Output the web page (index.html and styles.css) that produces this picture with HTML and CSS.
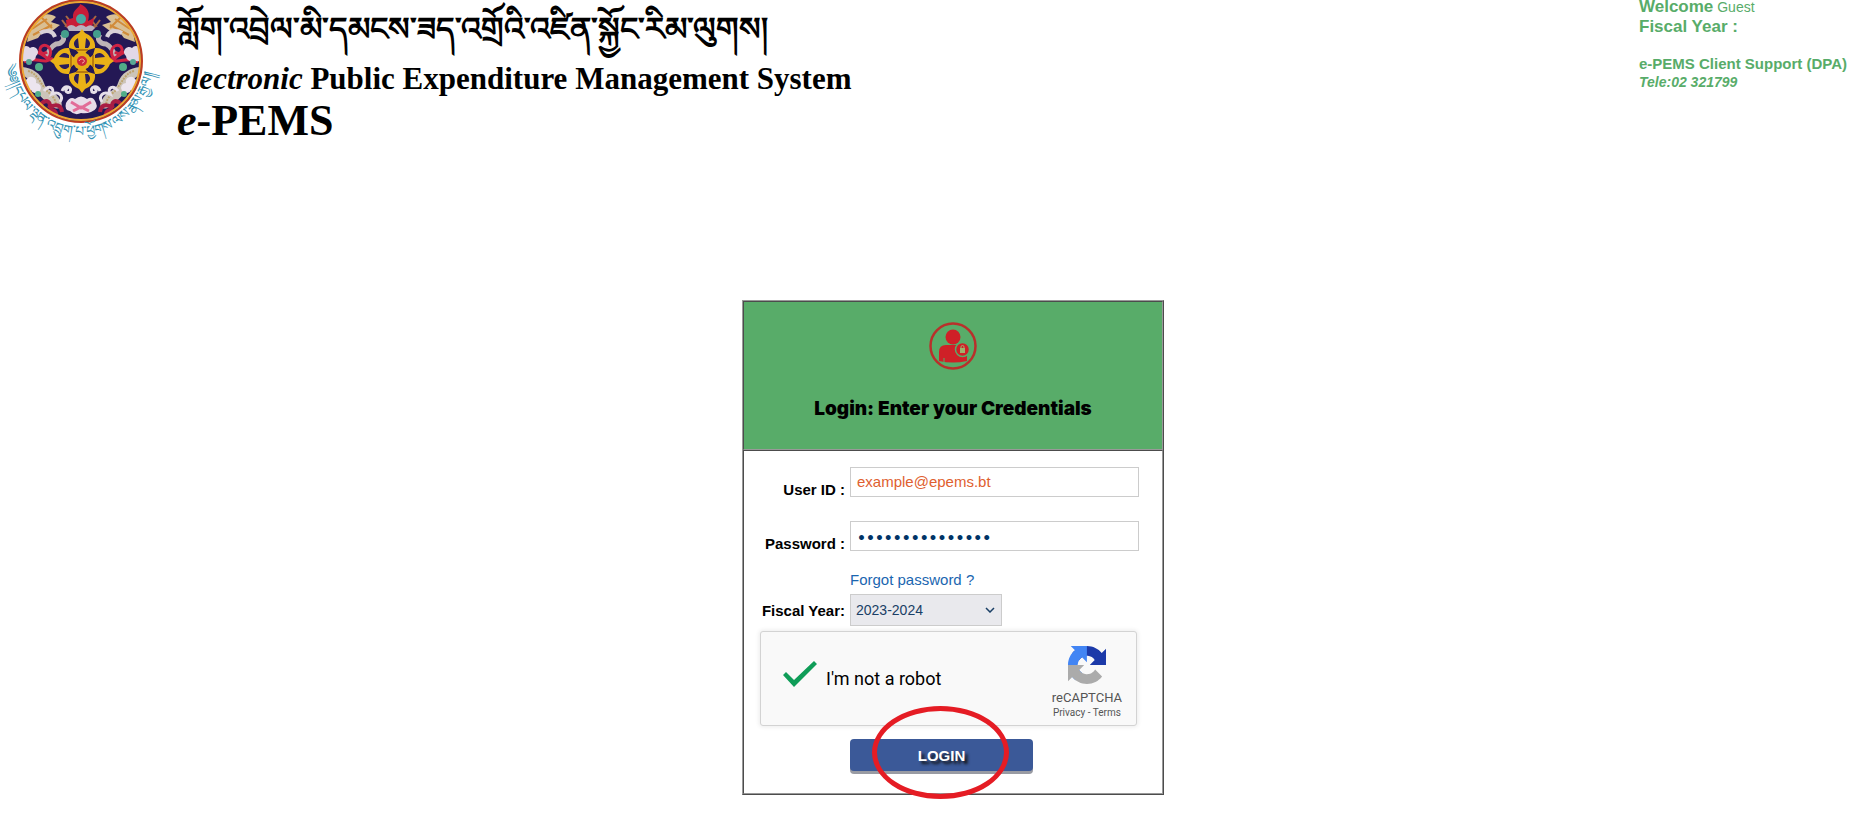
FILE: index.html
```html
<!DOCTYPE html>
<html lang="en">
<head>
  <meta charset="UTF-8">
  <meta name="viewport" content="width=device-width, initial-scale=1.0">
  <title>e-PEMS</title>
  <link rel="stylesheet" href="styles.css">
</head>
<body>
  <!-- Header -->
  <header class="header">
    <svg class="emblem" viewBox="0 0 170 150" role="img" aria-label="Royal Government of Bhutan">
      <defs>
        <clipPath id="disc"><circle cx="81" cy="61" r="59"/></clipPath>
        <path id="motto-line" d="M5 64 C12 109 44 136 81 136 C118 136 148 109 156 64"/>
        <g id="vajra">
          <path d="M82 57 L76 50 L69 48 C68 40 74 35 79 33 L82 29 L85 33 C90 35 96 40 95 48 L88 50 Z" fill="#e9b117"/>
          <path d="M78 38 C73 41 73 45 76 48 L79 48 Z M86 38 C91 41 91 45 88 48 L85 48 Z" fill="#2a1d5c"/>
          <path d="M76 50 H88" stroke="#a8690c" stroke-width="1.5"/>
        </g>
        <!-- one side of the disc, mirrored for the other -->
        <g id="dragon">
          <path d="M30 27 C35 15 48 11 56 17 L51 22 L60 25 L52 31 L45 29 L38 38 L27 42 Z" fill="#d9bf94"/>
          <path d="M32 29 L47 19 M33 35 L52 25 M40 16 L52 28" stroke="#d18b3a" stroke-width="2"/>
          <path d="M40 33 C47 29 53 31 55 37" fill="none" stroke="#d8d0d8" stroke-width="4"/>
          <path d="M62 34 C66 39 62 44 56 44 C50 47 48 52 47 57" fill="none" stroke="#beb4b6" stroke-width="5"/>
          <path d="M22 67 C32 68 41 73 44 83 C46 91 56 91 60 100 C65 107 58 111 53 107 C43 99 38 95 32 85 C28 78 24 75 21 76 Z" fill="#ccc4b9"/>
          <path d="M28 71 C37 73 40 83 47 91 C53 96 55 99 56 104" fill="none" stroke="#bda36e" stroke-width="2" stroke-dasharray="2 1"/>
          <path d="M23 57 C31 47 41 53 48 59 C54 51 48 43 42 46 C37 50 42 56 47 52 M24 62 C35 55 44 66 53 58" fill="none" stroke="#cf2344" stroke-width="3"/>
          <path d="M21 51 a5 5 0 0 1 9 -3 a5 5 0 0 1 6 8 a5 5 0 0 1 -8 4 a5 5 0 0 1 -7 -9Z" fill="#e2d8e7"/>
          <path d="M27 79 a5 5 0 0 1 9 4 a5 5 0 0 1 4 8 a5 5 0 0 1 -9 -1 a6 6 0 0 1 -4 -11Z" fill="#ece5ef"/>
          <path d="M44 91 C49 84 55 88 52 94 C59 91 64 96 60 102 M62 91 C65 84 73 87 70 92 C66 94 64 89 68 88" fill="none" stroke="#e6dfe9" stroke-width="3"/>
          <circle cx="65" cy="34" r="4" fill="#449e8c"/>
          <circle cx="29" cy="62" r="3" fill="#59a795"/>
          <circle cx="39" cy="67" r="4" fill="#51ad88"/>
          <circle cx="38" cy="94" r="3" fill="#51ad88"/>
          <path d="M41 104 C47 98 52 103 49 108 C56 103 61 105 62 112 M48 113 C53 107 57 112 56 117" fill="none" stroke="#a91d43" stroke-width="4"/>
          <path d="M66 16 L70 21 L66 26 L74 28 M62 20 L68 28" fill="none" stroke="#a96943" stroke-width="2"/>
        </g>
      </defs>
      <circle cx="81" cy="61" r="61" fill="#241855" stroke="#bd3c21" stroke-width="2"/>
      <g clip-path="url(#disc)">
        <use href="#dragon"/>
        <use href="#dragon" transform="matrix(-1 0 0 1 162 0)"/>
        <!-- jewel -->
        <path d="M73 18 C72 9 80 8 80 4 C89 8 90 14 88 21 L94 18 L92 28 H67 L66 20 Z" fill="#c81d38"/>
        <circle cx="81" cy="19" r="5" fill="#4aa8a1"/>
        <path d="M67 27 Q71 23 76 27 Q81 23 86 27 Q91 23 95 28 L92 31 H69 Z" fill="#bab1be"/>
        <!-- crossed thunderbolts -->
        <use href="#vajra"/>
        <use href="#vajra" transform="rotate(90 82 61)"/>
        <use href="#vajra" transform="rotate(180 82 61)"/>
        <use href="#vajra" transform="rotate(270 82 61)"/>
        <circle cx="82" cy="61" r="9" fill="#e6ad18"/>
        <circle cx="82" cy="61" r="5" fill="#c9273d"/>
        <path d="M79 61 a3 3 0 0 1 5 -1 a2 2 0 0 1 -2 3" fill="none" stroke="#f1a5a0"/>
        <!-- lotus -->
        <path d="M66 103 Q70 96 75 99 Q81 94 87 99 Q93 95 96 103 Q99 109 91 112 Q86 114 81 113 Q75 116 70 111 Q64 110 66 103Z" fill="#e8dce9"/>
        <path d="M71 102 L81 108 L91 102 M73 111 L81 107 L89 111" fill="none" stroke="#e26c98" stroke-width="3"/>
      </g>
      <circle cx="81" cy="61" r="59" fill="none" stroke="#efa633" stroke-width="2"/>
      <text class="motto"><textPath href="#motto-line" startOffset="1">༄༅།།དཔལ་ལྡན་འབྲུག་པ་ཕྱོགས་ལས་རྣམ་རྒྱལ།།</textPath></text>
    </svg>

    <div class="titles">
      <div class="title-dz" lang="dz">གློག་འབྲེལ་མི་དམངས་ཟད་འགྲོའི་འཛིན་སྐྱོང་རིམ་ལུགས།</div>
      <div class="title-full"><em>electronic</em> Public Expenditure Management System</div>
      <h1 class="title-short"><em>e</em>-PEMS</h1>
    </div>

    <div class="info">
      <div class="info-user"><strong>Welcome</strong> Guest</div>
      <div class="info-year">Fiscal Year :</div>
      <div class="info-support">e-PEMS Client Support (DPA)</div>
      <div class="info-tele">Tele:02 321799</div>
    </div>
  </header>

  <!-- Login -->
  <main class="main">
    <form class="login">
      <div class="login-head">
        <svg class="user-icon" viewBox="0 0 48 48" aria-hidden="true">
          <circle cx="24" cy="24" r="22.5" fill="none" stroke="#b9302b" stroke-width="2.5"/>
          <circle cx="24" cy="15" r="7.5" fill="#cf2027"/>
          <path d="M10 39 V30 Q10 23 17 23 H31 Q38 24 38 31 V39 Q24 42 10 39Z" fill="#cf2027"/>
          <path d="M15 36 V40" stroke="#58ac69"/>
          <circle cx="33.5" cy="27.5" r="7" fill="#cf2027" stroke="#58ac69" stroke-width="1.5"/>
          <rect x="31" y="26" width="5" height="5" fill="#9fb06c"/>
          <path d="M32 26 V25 a1.5 1.5 0 0 1 3 0 V26" fill="none" stroke="#9fb06c"/>
        </svg>
        <h2>Login: Enter your Credentials</h2>
      </div>

      <div class="login-body">
        <label class="name" for="user">User ID :</label>
        <input class="field" id="user" type="text" value="example@epems.bt">

        <label class="name" for="password">Password :</label>
        <input class="field field-password" id="password" type="password" value="123456789012345">

        <a class="forgot" href="#">Forgot password ?</a>

        <label class="name name-year" for="year">Fiscal Year:</label>
        <div class="year">
          <select id="year">
            <option>2023-2024</option>
          </select>
          <svg viewBox="0 0 10 6" aria-hidden="true"><path d="M1 1 L5 5 L9 1" fill="none" stroke="#1a3f66" stroke-width="1.5"/></svg>
        </div>

        <div class="captcha">
          <label class="robot"><input type="checkbox" checked> I'm not a robot</label>
          <div class="captcha-brand">
            <svg class="captcha-logo" viewBox="0 0 64 64" aria-hidden="true">
              <path fill="#1c3aa9" d="M64 31.955l-.033-1.37V4.687l-7.16 7.16C50.948 4.674 42.033.093 32.05.093c-10.4 0-19.622 4.96-25.458 12.64l11.736 11.86a15.55 15.55 0 0 1 4.754-5.334c2.05-1.6 4.952-2.906 8.968-2.906.485 0 .86.057 1.135.163 4.976.393 9.288 3.14 11.828 7.124l-8.307 8.307L64 31.953"/>
              <path fill="#4285f4" d="M31.862.094l-1.37.033H4.594l7.16 7.16C4.58 13.147 0 22.06 0 32.046c0 10.4 4.96 19.622 12.64 25.458L24.5 45.768a15.55 15.55 0 0 1-5.334-4.754c-1.6-2.05-2.906-4.952-2.906-8.968 0-.485.057-.86.163-1.135.393-4.976 3.14-9.288 7.124-11.828l8.307 8.307L31.86.095"/>
              <path fill="#ababab" d="M.001 32.045l.033 1.37v25.898l7.16-7.16c5.86 7.173 14.774 11.754 24.76 11.754 10.4 0 19.622-4.96 25.458-12.64l-11.736-11.86a15.55 15.55 0 0 1-4.754 5.334c-2.05 1.6-4.952 2.906-8.968 2.906-.485 0-.86-.057-1.135-.163-4.976-.393-9.288-3.14-11.828-7.124l8.307-8.307c-10.522.04-22.4.066-27.295-.005"/>
            </svg>
            <div class="captcha-name">reCAPTCHA</div>
            <div class="captcha-links"><a href="#">Privacy</a> - <a href="#">Terms</a></div>
          </div>
        </div>

        <div class="submit">
          <button class="btn" type="submit">LOGIN</button>
          <span class="marker"></span>
        </div>
      </div>
    </form>
  </main>
</body>
</html>
```

FILE: styles.css
```css
* {
  box-sizing: border-box;
}

body {
  margin: 0;
  font-family: "Liberation Sans", Arial, sans-serif;
  font-size: 15px;
  background: #fff;
  color: #000;
}

/* Header */
.header {
  display: flex;
  align-items: flex-start;
}

.emblem {
  width: 170px;
  height: 150px;
  flex: none;
}

.motto {
  font-size: 14px;
  fill: #3293b5;
}

.titles {
  flex: 1;
  padding: 2px 0 0 7px;
  font-family: "Liberation Serif", "Times New Roman", serif;
  font-weight: bold;
}

.title-dz {
  font-size: 32px;
  line-height: 54px;
  padding-bottom: 5px;
  white-space: nowrap;
}

.title-full {
  font-size: 31px;
  line-height: 36px;
}

.title-short {
  margin: 0;
  font-size: 44px;
  line-height: 48px;
}

.info {
  width: 216px;
  color: #58ac69;
  font-size: 16px;
  line-height: 20px;
  font-weight: bold;
  margin-top: -3px;
}

.info-user {
  font-weight: normal;
  font-size: 14px;
}

.info-user strong,
.info-year {
  font-size: 17px;
}

.info-support {
  margin-top: 18px;
  font-size: 15px;
  line-height: 18px;
  white-space: nowrap;
}

.info-tele {
  font-size: 14px;
  line-height: 18px;
  font-style: italic;
}

/* Login box */
.main {
  display: flex;
  justify-content: center;
  padding: 150px 0 24px 51px;
}

.login {
  width: 422px;
  border: 1px solid;
  border-color: #999 #4c4c4c #4c4c4c #999;
}

.login-head,
.login-body {
  border: 1px solid;
  border-color: #4c4c4c #999 #999 #4c4c4c;
}

.login-head {
  padding: 20px 0 27px;
  background: #58ac69;
  text-align: center;
}

.user-icon {
  display: block;
  width: 48px;
  height: 48px;
  margin: 0 auto;
}

.login-head h2 {
  margin: 26px 0 0;
  font-family: "Arial Black", Inter, sans-serif;
  font-size: 19px;
  line-height: 26px;
  font-weight: 900;
}

.login-body {
  display: grid;
  grid-template-columns: 85px 1fr;
  column-gap: 5px;
  padding: 16px 23px 22px 16px;
}

.name {
  padding-top: 14px;
  font-weight: bold;
  line-height: 18px;
  text-align: right;
  white-space: nowrap;
}

.name-year {
  padding-top: 8px;
}

.field {
  width: 100%;
  height: 30px;
  margin-bottom: 24px;
  padding: 0 6px 2px;
  border: 1px solid #ccc;
  font-family: inherit;
  font-size: 15px;
  color: #e0602f;
}

.field-password {
  margin-bottom: 20px;
  padding: 3px 6px 0;
  font-family: "DejaVu Sans", sans-serif;
  font-size: 14px;
  font-weight: bold;
  color: #003366;
}

.forgot {
  grid-column: 2;
  line-height: 18px;
  margin-bottom: 5px;
  color: #1a66b0;
  text-decoration: none;
}

.year {
  position: relative;
  width: 152px;
}

.year select {
  appearance: none;
  display: block;
  width: 100%;
  height: 32px;
  padding: 0 24px 0 5px;
  border: 1px solid #ccc;
  border-radius: 0;
  background: #e9e9ed;
  color: #1a3f66;
  font-family: inherit;
  font-size: 14px;
}

.year svg {
  position: absolute;
  right: 7px;
  top: 13px;
  width: 10px;
  height: 6px;
  pointer-events: none;
}

/* Captcha */
.captcha {
  grid-column: 1 / -1;
  display: flex;
  justify-content: space-between;
  height: 95px;
  margin: 5px 2px 0 0;
  padding: 14px 14px 0 22px;
  border: 1px solid #d3d3d3;
  border-radius: 3px;
  background: #f9f9f9;
  box-shadow: 0 0 4px 1px rgba(0, 0, 0, 0.08);
  font-family: Roboto, sans-serif;
}

.robot {
  display: flex;
  align-items: center;
  gap: 9px;
  height: 64px;
  font-size: 18px;
}

.robot input {
  appearance: none;
  width: 34px;
  height: 26px;
  margin: 0 0 8px;
  background: #0f9d58;
  clip-path: polygon(3px 11px, 11px 19px, 31px 0, 34px 3px, 11px 26px, 0 14px);
}

.captcha-brand {
  color: #555;
  text-align: center;
}

.captcha-logo {
  display: block;
  width: 38px;
  height: 38px;
  margin: 0 auto 6px;
}

.captcha-name {
  font-size: 13px;
  line-height: 16px;
}

.captcha-links {
  font-size: 10px;
  line-height: 14px;
}

.captcha-links a {
  color: #555;
  text-decoration: none;
}

/* Login button */
.submit {
  grid-column: 2;
  position: relative;
  width: 183px;
  margin-top: 13px;
}

.btn {
  display: block;
  width: 100%;
  height: 32px;
  border: none;
  border-radius: 4px;
  background: #3b5998;
  box-shadow: 0 3px #999ba3;
  color: #fff;
  font-family: inherit;
  font-size: 15px;
  font-weight: bold;
  text-shadow: 3px 3px 3px #111;
  cursor: pointer;
}

.marker {
  position: absolute;
  left: 22px;
  top: -33px;
  width: 137px;
  height: 93px;
  border: 5px solid #e51c24;
  border-radius: 50%;
  pointer-events: none;
}
```
